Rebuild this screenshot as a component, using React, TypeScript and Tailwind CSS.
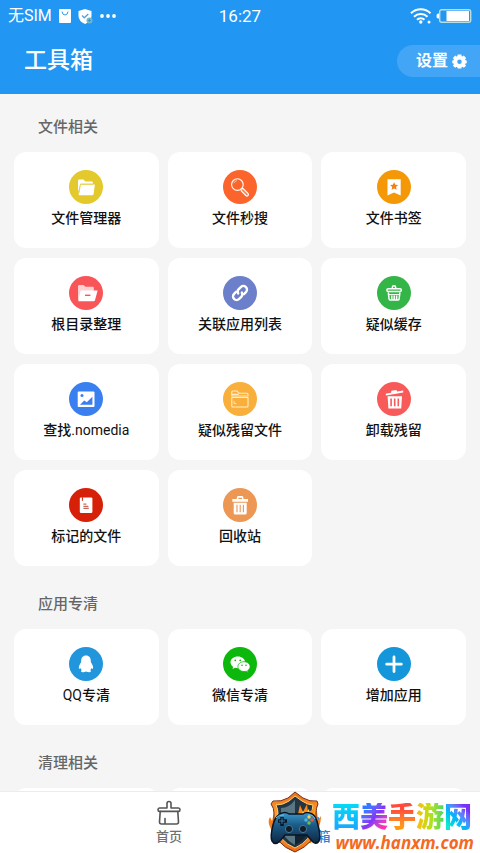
import type { ReactNode } from "react";

type Tool = { name: string; latin?: string; latinFirst?: boolean; color: string; glyph: ReactNode };

const fileTools: Tool[] = [
  {
    name: "文件管理器",
    color: "bg-[#e3c92b]",
    glyph: (
      <>
        <path d="M9 22V10.8q0-1.3 1.3-1.3h4.2l1.8 2h6.4q1.2 0 1.2 1.2v1.1H11.6z" fill="#fff" />
        <path d="M11.6 14.6h14.3l-1.3 9.4q-.2 1.2-1.4 1.2H10.6q-1.1 0-1-1.2z" fill="#fff" />
        <path d="M10.2 22.6l1.2-8.4h12.8" fill="none" stroke="#e3c92b" strokeWidth=".7" />
      </>
    ),
  },
  {
    name: "文件秒搜",
    color: "bg-[#fb652c]",
    glyph: (
      <g fill="none" stroke="#fff" strokeWidth="1.1">
        <circle cx="14.4" cy="14.6" r="5.8" />
        <path d="M10.9 13.2a4 4 0 0 1 3-2.6" strokeWidth=".8" opacity=".7" />
        <path d="M18.8 18.4l1.6.4 4.6 4.5a1.5 1.5 0 0 1-2.2 2.2l-4.5-4.6-.4-1.6z" fill="#fb8a5e" />
      </g>
    ),
  },
  {
    name: "文件书签",
    color: "bg-[#f59808]",
    glyph: (
      <>
        <path d="M10.5 9.3h13.2v16.3L17 22.4l-6.500 3.200z" fill="#fff" />
        <path d="M17.1 12.2l1.2 2.6 2.8.3-2.1 1.9.6 2.8-2.5-1.4-2.5 1.4.6-2.8-2.1-1.9 2.8-.3z" fill="#f07f16" />
      </>
    ),
  },
  {
    name: "根目录整理",
    color: "bg-[#f95457]",
    glyph: (
      <>
        <path d="M9 24V10.3q0-1.200 1.200-1.200h4.300l1.900 1.700h7.300q1.200 0 1.200 1.200v2.600z" fill="#ffd0d0" />
        <path d="M11.600 14.400h17l-2.600 9.900q-.3 1-1.400 1H9.200z" fill="#fff" />
        <path d="M16 19.300h5.400" stroke="#f95457" strokeWidth="1.400" />
      </>
    ),
  },
  {
    name: "关联应用列表",
    color: "bg-[#6b7fcb]",
    glyph: (
      <g fill="none" stroke="#fff" strokeWidth="2.400" strokeLinecap="round" transform="rotate(-45 17 17)">
        <path d="M15 13.400h-2.800a3.600 3.600 0 0 0 0 7.200h3a3.600 3.600 0 0 0 3.400-2.600" />
        <path d="M19 20.600h2.800a3.600 3.600 0 0 0 0-7.200h-3a3.600 3.600 0 0 0-3.400 2.600" />
      </g>
    ),
  },
  {
    name: "疑似缓存",
    color: "bg-[#34b548]",
    glyph: (
      <g fill="none" stroke="#fff" strokeWidth="1.500" strokeLinejoin="round">
        <path d="M15.300 12.600v-1.200a1.700 1.700 0 0 1 3.400 0v1.200" />
        <rect x="9.900" y="12.800" width="14.400" height="2.800" rx="1.300" />
        <path d="M11.300 16.300l.8 6.800q.2 1 1.200 1h7.600q1 0 1.200-1l.8-6.800M14.800 24v-4.400M17.200 24v-4.400M19.600 24v-4.400" />
        <path d="M12 18.600h10.400" strokeWidth="1" />
      </g>
    ),
  },
  {
    name: "查找",
    latin: ".nomedia",
    color: "bg-[#397ff0]",
    glyph: (
      <>
        <rect x="8.700" y="9.500" width="16.800" height="15.600" rx="1" fill="#fff" />
        <circle cx="13" cy="13.500" r="1.500" fill="#397ff0" />
        <path d="M11 22.800l4.200-4.400 2.600 1.900 5.600-5.600v8.100z" fill="#397ff0" />
      </>
    ),
  },
  {
    name: "疑似残留文件",
    color: "bg-[#f9af3b]",
    glyph: (
      <g fill="none" stroke="#ffedc9" strokeWidth="1.100" strokeLinejoin="round">
        <path d="M8.800 14V10q0-1 1-1h4.200l2 2.300h8q1 0 1 1V14z" />
        <path d="M8.800 15.500V24q0 1 1 1H24q1 0 1-1v-8.500zM9 12.400h6.500" />
        <path d="M11 18.800v2.800h2.500" strokeWidth=".8" />
      </g>
    ),
  },
  {
    name: "卸载残留",
    color: "bg-[#f85a5a]",
    glyph: (
      <>
        <path d="M8.700 11.700l5.300-1 .5-2 4.800-.8.900 1.500 6-.8v1.900L9 13.600z" fill="#fff" />
        <path d="M10.600 14.200H25l-.8 12.400H11.400z" fill="#fff" />
        <path d="M14.100 16.400v7.800M17.700 16.400v7.800M21.300 16.400v7.800" stroke="#f85a5a" strokeWidth="1.600" />
      </>
    ),
  },
  {
    name: "标记的文件",
    color: "bg-[#d62008]",
    glyph: (
      <>
        <rect x="10.800" y="9.400" width="12.600" height="15.600" rx="1.200" fill="#fff" />
        <path d="M13.400 9.200v3.600" stroke="#d62008" strokeWidth="1" />
        <path d="M14.400 16.200h3M14.400 18.300h5M14.400 20.400h5.400" stroke="#c7695a" strokeWidth="1.200" />
      </>
    ),
  },
  {
    name: "回收站",
    color: "bg-[#ed9755]",
    glyph: (
      <>
        <path
          d="M9.300 11h4.500V9.600q0-1.500 1.500-1.500h3.600q1.500 0 1.500 1.500V11H25v2.700H9.300zM15.400 11h3.500V9.700h-3.500z"
          fill="#fff"
          fillRule="evenodd"
        />
        <path d="M10.700 14.800h13v10.100q0 1.700-1.700 1.700h-9.600q-1.700 0-1.700-1.700z" fill="#fff" />
        <path d="M14 16.800v7.400M17.200 16.800v7.400M20.400 16.800v7.400" stroke="#ed9755" strokeWidth="1.100" />
      </>
    ),
  },
];

const appTools: Tool[] = [
  {
    name: "专清",
    latin: "QQ",
    latinFirst: true,
    color: "bg-[#2196dc]",
    glyph: (
      <path
        d="M17 8.600c-3.200 0-4.800 2.400-4.800 5.200 0 1.400-.4 2-1 3-1 1.700-1.700 3.400-1.200 4.800.3.600 1 .1 1.500-.7.2 1 .7 1.800 1.300 2.400-.8.300-.9.900-.6 1.500.4.700 3.400.6 4.800-.3 1.400.9 4.400 1 4.800.3.300-.6.200-1.200-.6-1.500.6-.6 1.100-1.400 1.300-2.400.5.800 1.200 1.300 1.500.7.500-1.400-.2-3.100-1.200-4.800-.6-1-1-1.600-1-3 0-2.800-1.600-5.200-4.800-5.200z"
        fill="#fff"
      />
    ),
  },
  {
    name: "微信专清",
    color: "bg-[#0cb80b]",
    glyph: (
      <>
        <path
          d="M14.800 9.400c-4.100 0-7.300 2.600-7.300 5.900 0 1.900 1 3.500 2.700 4.600l-.7 2.200 2.600-1.300q1.300.4 2.700.4c4.100 0 7.300-2.600 7.300-5.900s-3.200-5.900-7.300-5.900z"
          fill="#fff"
        />
        <path
          d="M21 14.700c-3.500 0-6.100 2.200-6.100 4.900s2.600 4.900 6.100 4.900q1.100 0 2.100-.3l2.200 1.200-.6-1.900c1.500-.9 2.400-2.300 2.400-3.900 0-2.700-2.600-4.900-6.100-4.900z"
          fill="#fff"
          stroke="#0cb80b"
          strokeWidth=".8"
        />
        <g fill="#0cb80b">
          <circle cx="12.300" cy="13.300" r=".9" />
          <circle cx="17.200" cy="13.300" r=".9" />
          <circle cx="19" cy="18.200" r=".8" />
          <circle cx="23" cy="18.200" r=".8" />
        </g>
      </>
    ),
  },
  {
    name: "增加应用",
    color: "bg-[#1496db]",
    glyph: <path d="M17 10v14.500M9.700 17.200h14.600" stroke="#fff" strokeWidth="2.800" strokeLinecap="round" />,
  },
];

function ToolCard({ tool }: { tool: Tool }) {
  const latin = tool.latin ? <span className="font-normal">{tool.latin}</span> : null;
  return (
    <button
      type="button"
      className="flex flex-col items-center gap-1 rounded-xl bg-white pt-[18px] pb-5 text-sm leading-5 font-medium text-[#111]"
    >
      <span className={`size-[34px] rounded-full ${tool.color}`}>
        <svg viewBox="0 0 34 34" className="size-full" aria-hidden="true">
          {tool.glyph}
        </svg>
      </span>
      <span>
        {tool.latinFirst && latin}
        {tool.name}
        {!tool.latinFirst && latin}
      </span>
    </button>
  );
}

function Section({ title, children }: { title: string; children: ReactNode }) {
  return (
    <section>
      <h2 className="mb-[13px] px-6 text-[15px] leading-6 font-medium text-[#666]">{title}</h2>
      <div className="grid grid-cols-3 gap-x-[9px] gap-y-2.5">{children}</div>
    </section>
  );
}

function StatusBar() {
  return (
    <div className="grid grid-cols-3 items-center px-2 text-base leading-8">
      <div className="flex items-center gap-[7px]">
        <span>无SIM</span>
        <svg viewBox="0 0 12 14" className="h-3.5 w-3" aria-hidden="true">
          <rect width="12" height="14" rx="1" fill="#fff" />
          <path d="M3 2.500q.3 3.500 3 3.500t3-3.500" fill="none" stroke="#3699ed" />
        </svg>
        <svg viewBox="0 0 15 15" className="size-[15px]" aria-hidden="true">
          <path d="M7 0l6.500 2v5q0 5-6.500 8Q.500 12 .500 7V2z" fill="#fff" />
          <path d="M4 6.500l2.300 2.300L10.300 5" fill="none" stroke="#5b9eda" strokeWidth="1.300" />
          <circle cx="11.500" cy="11.500" r="3" fill="#6db9c6" />
          <path d="M10 11.500h3M11.500 10v3" stroke="#3193cf" strokeWidth=".8" />
        </svg>
        <svg viewBox="0 0 16 4" className="h-1 w-4" fill="#fff" aria-hidden="true">
          <circle cx="2" cy="2" r="1.900" />
          <circle cx="8" cy="2" r="1.900" />
          <circle cx="14" cy="2" r="1.900" />
        </svg>
      </div>
      <time className="text-center text-[17px]">16:27</time>
      <div className="flex items-center justify-end gap-1">
        <svg viewBox="0 0 22 16" className="h-4 w-[22px]" fill="none" stroke="#fff" strokeWidth="2" aria-hidden="true">
          <path d="M1 5.300a14 14 0 0 1 19.500 0M4 8.700a9.600 9.600 0 0 1 13.500 0M7 11.800a5.300 5.300 0 0 1 7.500 0" />
          <circle cx="10.800" cy="14" r="1.700" fill="#fff" stroke="none" />
          <circle cx="19" cy="14" r="1.500" fill="#fff" stroke="none" />
        </svg>
        <svg viewBox="0 0 36 14" className="h-3.5 w-9" aria-hidden="true">
          <path d="M3 4.500H2Q.500 4.500.500 7T2 9.500h1z" fill="#fff" />
          <rect x="3.700" y=".700" width="31" height="12.600" rx="2" fill="none" stroke="#b7e0e6" strokeWidth="1.400" />
          <rect x="10.500" y="2" width="22.500" height="10" fill="#fff" />
        </svg>
      </div>
    </div>
  );
}

function Gear() {
  return (
    <svg viewBox="0 0 16 16" className="size-[15px]" fill="#fff" aria-hidden="true">
      <path
        fillRule="evenodd"
        d="M6 .600h4l.3 1.700.8.300 1.500-1L15 4.300l-1 1.500.3.800 1.400.200v3l-1.400.3-.3.800 1 1.500-2.400 2.300-1.500-1-.8.300-.3 1.500H6l-.3-1.500-.8-.3-1.500 1L1 12.400l1-1.500-.3-.8-1.400-.3v-3l1.400-.2.3-.8-1-1.500 2.400-2.700 1.500 1 .8-.3zM8 5.800a2.400 2.400 0 1 0 0 4.800 2.400 2.400 0 0 0 0-4.800z"
      />
    </svg>
  );
}

function ShieldLogo() {
  return (
    <svg viewBox="0 0 56 62" className="h-[62px] w-14 shrink-0" aria-hidden="true">
      <defs>
        <linearGradient id="rim" x1="0" y1="0" x2="0" y2="1">
          <stop offset="0" stopColor="#ee6c18" />
          <stop offset=".5" stopColor="#ffb238" />
          <stop offset="1" stopColor="#f06813" />
        </linearGradient>
        <linearGradient id="pad" x1="0" y1="0" x2="0" y2="1">
          <stop offset="0" stopColor="#3a9bcd" />
          <stop offset=".4" stopColor="#1b5b88" />
          <stop offset="1" stopColor="#0e2741" />
        </linearGradient>
      </defs>
      <path d="M5 38Q1 31 4 26l2 4 2-9 43-1 1 9 3-4q0 8-4 15L45 52H12z" fill="#f47b18" />
      <path
        d="M29 1l8 6q7 4 14 3l1 3q-2 4-2 9v13q0 17-21 26Q8 53 8 35V22q0-5-3-9l2-3q8 1 15-3z"
        fill="url(#rim)"
        stroke="#713019"
      />
      <path
        d="M29 5l7 5q6 4 11 4-1 4-1 9v12q0 14-17 22Q12 50 12 35V23q0-5-2-9 7 0 13-4z"
        fill="#233645"
        stroke="#ffd070"
      />
      <path d="M29 9v45Q15 46 15 34V17q8 0 14-8z" fill="#5a7682" />
      <path d="M29 54V34h15q-1 13-15 20z" fill="#132232" />
      <path d="M15 28l3-5 2 3 6-4-1 4 7-3 2-9 3 7 4-8 1 8 6-3-2 11z" fill="#ff8a1a" />
      <path d="M25 28l5-3v2l5-3 2-4 2 3 4-5 1 9z" fill="#ffd64d" />
      <path
        d="M14 23q5-3 9 0h14q4-3 9 0 4 2 6 11 3 11 1 16-3 5-8-1l-4-5H19l-5 6q-5 5-8 0-2-4 1-16 2-8 7-11z"
        fill="url(#pad)"
        stroke="#081523"
        strokeWidth="1.500"
      />
      <path d="M10 27q3-4 8-3M42 24q5-1 7 4" fill="none" stroke="#6cc7f0" />
      <path d="M16 26v9M12 30h9" stroke="#071726" strokeWidth="3.500" />
      <path d="M16 27v6M13 30h6" stroke="#3c789a" />
      <g stroke="#467997" fill="#101d2b">
        <circle cx="23" cy="38" r="3.600" />
        <circle cx="37" cy="38" r="3.600" />
      </g>
      <circle cx="43" cy="26" r="1.700" fill="#f9d541" />
      <circle cx="40" cy="29" r="1.700" fill="#4cb6e8" />
      <circle cx="46" cy="29" r="1.700" fill="#f05936" />
      <circle cx="43" cy="32" r="1.700" fill="#68c546" />
    </svg>
  );
}

function SiteBadge() {
  return (
    <div className="pointer-events-none absolute right-1.5 bottom-0 flex items-end gap-2.5">
      <ShieldLogo />
      <div className="flex flex-col items-end">
        <p className="mr-0.5 flex text-[28px] leading-[30px] font-black">
          <span className="bg-linear-to-b from-[#06dcf5] to-[#1e9dff] bg-clip-text text-transparent">西</span>
          <span className="bg-linear-to-br from-[#2f7bff] from-20% via-[#8333f5] to-[#ff2fb0] to-80% bg-clip-text text-transparent">
            美
          </span>
          <span className="bg-linear-to-b from-[#ff4a3c] from-20% to-[#ff9a10] to-80% bg-clip-text text-transparent">手</span>
          <span className="bg-linear-to-r from-[#ffb810] via-[#b8e010] to-[#35d860] bg-clip-text text-transparent">游</span>
          <span className="bg-linear-to-tr from-[#10e8d0] from-20% via-[#12a8ff] to-[#7a30f5] to-80% bg-clip-text text-transparent">
            网
          </span>
        </p>
        <p className="font-['Open_Sans',sans-serif] text-[17px] leading-5 font-bold text-[#f4691e] italic">www.hanxm.com</p>
      </div>
    </div>
  );
}

export default function App() {
  return (
    <div className="relative flex h-screen flex-col overflow-hidden bg-[#f5f5f5] font-[Roboto,'Noto_Sans_CJK_SC',sans-serif]">
      <header className="bg-[#2196f3] text-white">
        <StatusBar />
        <div className="flex items-start justify-between pt-[13px] pb-[17px] pl-6">
          <h1 className="text-[23px] leading-8 font-medium">工具箱</h1>
          <button
            type="button"
            className="flex h-8 items-center gap-1 rounded-l-full bg-[#42a5f5] pr-[13px] pl-[19px] text-base font-bold"
          >
            设置
            <Gear />
          </button>
        </div>
      </header>

      <main className="flex min-h-0 flex-1 flex-col gap-[26px] overflow-hidden px-3.5 pt-[21px]">
        <Section title="文件相关">
          {fileTools.map((tool) => (
            <ToolCard key={tool.name} tool={tool} />
          ))}
        </Section>
        <Section title="应用专清">
          {appTools.map((tool) => (
            <ToolCard key={tool.name} tool={tool} />
          ))}
        </Section>
        <Section title="清理相关">
          <div className="h-24 rounded-xl bg-white" />
          <div className="h-24 rounded-xl bg-white" />
          <div className="h-24 rounded-xl bg-white" />
        </Section>
      </main>

      <nav className="flex shrink-0 justify-center border-t border-[#ececec] bg-white pt-2 pb-[7px] text-[13px] leading-[18px] font-medium text-[#707070]">
        <button type="button" className="flex w-[142px] flex-col items-center gap-0.5">
          <svg
            viewBox="0 0 24 26"
            className="h-[26px] w-6"
            fill="none"
            stroke="#555"
            strokeWidth="1.600"
            strokeLinejoin="round"
            strokeLinecap="round"
            aria-hidden="true"
          >
            <path d="M10 8V3.500a2 2 0 0 1 4 0V8h7.500q1.500 0 1.500 1.700t-1.500 1.700h-19Q1 11.400 1 9.700T2.500 8z" />
            <path d="M3.200 11.500l-.700 10.500q0 2 2 2h15q2 0 2-2l-.700-10.500M8 23.500v-5" />
          </svg>
          首页
        </button>
        <button type="button" className="flex w-[142px] flex-col items-center gap-0.5 text-[#2186d8]">
          <svg viewBox="0 0 24 26" className="h-[26px] w-6" fill="#2186d8" aria-hidden="true">
            <rect x="4" y="8" width="7" height="7" rx="1" />
            <rect x="4" y="17" width="7" height="7" rx="1" />
            <rect x="13" y="17" width="7" height="7" rx="1" />
          </svg>
          工具箱
        </button>
      </nav>

      <SiteBadge />
    </div>
  );
}
